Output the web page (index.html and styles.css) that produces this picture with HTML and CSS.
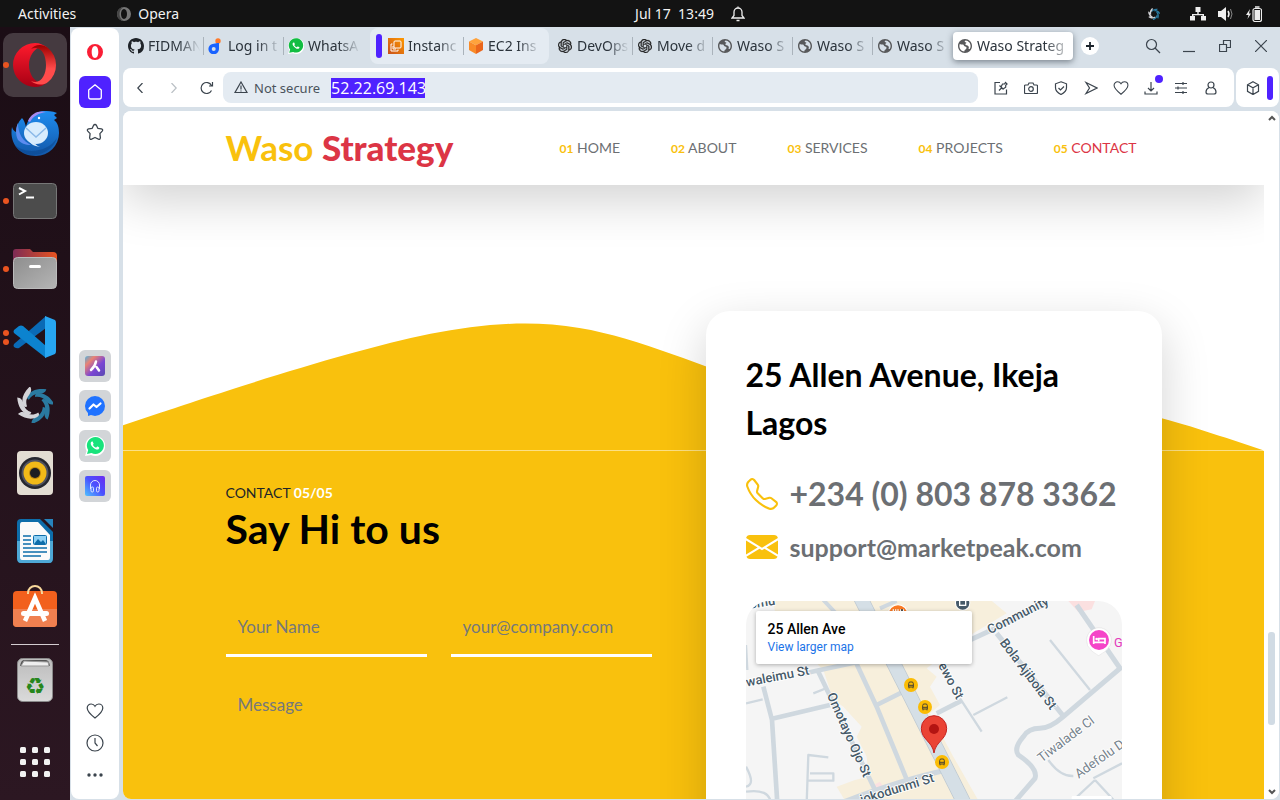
FILE: index.html
```html
<!DOCTYPE html>
<html lang="en">
<head>
<meta charset="utf-8">
<title>Waso Strategy</title>
<link rel="stylesheet" href="styles.css">
</head>
<body>
<svg class="defs" aria-hidden="true">
  <defs>
    <linearGradient id="opera-l" x1="0" y1="0" x2="0" y2="1"><stop offset="0" stop-color="#ff1b2d"/><stop offset="1" stop-color="#a70014"/></linearGradient>
    <linearGradient id="opera-r" x1="0" y1="0" x2="0" y2="1"><stop offset="0" stop-color="#9c0000"/><stop offset=".6" stop-color="#ff4b4b"/></linearGradient>
    <linearGradient id="bird" x1="0" y1="0" x2="0" y2="1"><stop offset="0" stop-color="#1f8df0"/><stop offset="1" stop-color="#1257a8"/></linearGradient>
    <linearGradient id="folder" x1="0" y1="0" x2="1" y2="0"><stop offset="0" stop-color="#7d2b55"/><stop offset="1" stop-color="#e95420"/></linearGradient>
    <linearGradient id="grey" x1="0" y1="0" x2="1" y2="1"><stop offset="0" stop-color="#8e8e8e"/><stop offset="1" stop-color="#b5b5b5"/></linearGradient>
    <linearGradient id="bin" x1="0" y1="0" x2="0" y2="1"><stop offset="0" stop-color="#bcbcbc"/><stop offset="1" stop-color="#dadada"/></linearGradient>
    <linearGradient id="aria" x1="0" y1="0" x2="1" y2="1"><stop offset="0" stop-color="#4fb3e0"/><stop offset=".25" stop-color="#e98273"/><stop offset=".6" stop-color="#7a46d4"/><stop offset="1" stop-color="#5a4bb0"/></linearGradient>
    <linearGradient id="player" x1="0" y1="1" x2="1" y2="0"><stop offset="0" stop-color="#4fc3ff"/><stop offset=".5" stop-color="#4a52ff"/><stop offset="1" stop-color="#6b2cf0"/></linearGradient>
    <linearGradient id="aws" x1="0" y1="1" x2="1" y2="0"><stop offset="0" stop-color="#c8511b"/><stop offset="1" stop-color="#f90"/></linearGradient>
    <symbol id="globe" viewBox="2 2 20 20"><path d="M12 2C6.480 2 2 6.480 2 12s4.480 10 10 10 10-4.480 10-10S17.520 2 12 2zM4 12c0-1 .2-2 .5-2.800 1.500.8 3 .8 4.500.8 1.800 0 1 2.500 3 2.800 1.800.2 2.500 1 2 2.700-.4 1.400-2 1.500-2.500 2.500-.3.8-.5 1.500-.5 2C7 19.500 4 16 4 12zm13 3.500c1-1 .5-2.500-.5-3.500s-3.500-.8-4-2 1.500-1.500 1.500-2.500-2.500-.5-2.500-1.800c0-.7.8-1.200 1.500-1.500 4 .5 7 3.800 7 7.800 0 1.500-.4 2.800-1 4-.8.6-1.600.4-2-.5z" fill="#58595b"/></symbol>
    <symbol id="gpt" viewBox="0 0 24 24"><path d="M22.2819 9.8211a5.9847 5.9847 0 0 0-.5157-4.9108 6.0462 6.0462 0 0 0-6.5098-2.9A6.0651 6.0651 0 0 0 4.9807 4.1818a5.9847 5.9847 0 0 0-3.9977 2.9 6.0462 6.0462 0 0 0 .7427 7.0966 5.98 5.98 0 0 0 .511 4.9107 6.051 6.051 0 0 0 6.5146 2.9001A5.9847 5.9847 0 0 0 13.2599 24a6.0557 6.0557 0 0 0 5.7718-4.2058 5.9894 5.9894 0 0 0 3.9977-2.9001 6.0557 6.0557 0 0 0-.7475-7.0729zm-9.022 12.6081a4.4755 4.4755 0 0 1-2.8764-1.0408l.1419-.0804 4.7783-2.7582a.7948.7948 0 0 0 .3927-.6813v-6.7369l2.02 1.1686a.071.071 0 0 1 .038.052v5.5826a4.504 4.504 0 0 1-4.4945 4.4944zm-9.6607-4.1254a4.4708 4.4708 0 0 1-.5346-3.0137l.142.0852 4.783 2.7582a.7712.7712 0 0 0 .7806 0l5.8428-3.3685v2.3324a.0804.0804 0 0 1-.0332.0615L9.74 19.9502a4.4992 4.4992 0 0 1-6.1408-1.6464zM2.3408 7.8956a4.485 4.485 0 0 1 2.3655-1.9728V11.6a.7664.7664 0 0 0 .3879.6765l5.8144 3.3543-2.0201 1.1685a.0757.0757 0 0 1-.071 0l-4.8303-2.7865A4.504 4.504 0 0 1 2.3408 7.872zm16.5963 3.8558L13.1038 8.364 15.1192 7.2a.0757.0757 0 0 1 .071 0l4.8303 2.7913a4.4944 4.4944 0 0 1-.6765 8.1042v-5.6772a.79.79 0 0 0-.407-.667zm2.0107-3.0231l-.142-.0852-4.7735-2.7818a.7759.7759 0 0 0-.7854 0L9.409 9.2297V6.8974a.0662.0662 0 0 1 .0284-.0615l4.8303-2.7866a4.4992 4.4992 0 0 1 6.6802 4.66zM8.3065 12.863l-2.02-1.1638a.0804.0804 0 0 1-.038-.0567V6.0742a4.4992 4.4992 0 0 1 7.3757-3.4537l-.142.0805L8.704 5.459a.7948.7948 0 0 0-.3927.6813zm1.0976-2.3654l2.602-1.4998 2.6069 1.4998v2.9994l-2.5974 1.4997-2.6067-1.4997Z" fill="#222" stroke="#222" stroke-width=".6"/></symbol>
    <symbol id="handset" viewBox="0 0 16 16"><path d="M11.603 9.653c-.197-.1-1.17-.578-1.353-.643-.182-.066-.315-.098-.445.099-.133.197-.513.643-.627.775-.114.133-.232.148-.43.05-.197-.1-.836-.308-1.592-.985-.59-.525-.985-1.175-1.103-1.372-.114-.198-.011-.304.088-.403.087-.088.197-.232.296-.346.1-.114.133-.198.198-.33.065-.134.034-.248-.015-.347-.05-.099-.445-1.076-.612-1.47-.16-.389-.323-.335-.445-.34-.114-.007-.247-.007-.38-.007a.729.729 0 0 0-.529.247c-.182.198-.691.677-.691 1.654 0 .977.71 1.916.81 2.049.098.133 1.394 2.132 3.383 2.992.47.205.84.326 1.129.418.475.152.904.129 1.246.08.38-.058 1.171-.48 1.338-.943.164-.464.164-.86.114-.943-.049-.084-.182-.133-.378-.232z" fill="#fff"/></symbol>
    <symbol id="heart" viewBox="0 0 18 18"><path d="M9 16C4.500 12.500 1.200 9.500 1.200 6a4 4 0 0 1 4-4C7 2 8.200 2.800 9 4.200 9.800 2.800 11 2 12.800 2a4 4 0 0 1 4 4c0 3.500-3.300 6.500-7.800 10z"/></symbol>
    <path id="blade" d="M10 8.500C13 3 20 0 30 1.500 29 5 26 6.500 22 6.500c-5 0-8 2-10.500 6C9.500 11.500 9.200 10 10 8.500z"/>
    <symbol id="swirl" viewBox="-1 -1 38 38">
      <g fill="#2a7aa0"><use href="#blade"/><use href="#blade" transform="rotate(51 18 18)"/><use href="#blade" transform="rotate(103 18 18)"/><use href="#blade" transform="rotate(154 18 18)"/></g>
      <g fill="#d4d4d8"><use href="#blade" transform="rotate(206 18 18)"/><use href="#blade" transform="rotate(257 18 18)"/><use href="#blade" transform="rotate(309 18 18)"/></g>
    </symbol>
    <symbol id="bus" viewBox="-21 -21 42 42"><circle r="21" fill="#fbbc04"/><path d="M-7-4q0-5 4-5h6q4 0 4 5v10H-7z" fill="none" stroke="#4a4433" stroke-width="3"/><path d="M-7 1H7M-6 6v4M6 6v4" stroke="#4a4433" stroke-width="3"/></symbol>
  </defs>
</svg>

<header class="topbar">
  <div class="topbar-left">
    <span>Activities</span>
    <span class="topbar-app"><svg width="14" height="14" viewBox="0 0 14 14"><path fill-rule="evenodd" d="M7 0a7 7 0 1 0 0 14A7 7 0 0 0 7 0zm0 2c2 0 3 2.500 3 5s-1 5-3 5-3-2.500-3-5 1-5 3-5z" fill="#777"/><path d="M7 0a7 7 0 0 0 0 14C1 12 1 2 7 0z" fill="#444"/></svg>Opera</span>
  </div>
  <div class="topbar-clock"><span>Jul 17&nbsp; 13:49</span><svg width="14" height="16" viewBox="0 0 14 16" fill="none" stroke="#eee" stroke-width="1.300"><path d="M1 12h12l-2-2.500V6a4 4 0 0 0-8 0v3.500zM5.500 14.500h3M7 2V.5"/></svg></div>
  <div class="topbar-tray">
    <svg width="12" height="12"><use href="#swirl"/></svg>
    <svg width="16" height="14" viewBox="0 0 16 14" fill="#eee"><path d="M5.500 0h5v5H8.700v2H14v2h2v4.500h-5V9h1.500V8.300h-9V9H5v4.500H0V9h2V7h5.300V5H5.500z"/></svg>
    <svg width="16" height="14" viewBox="0 0 16 14"><path d="M0 4h3l5-4v14l-5-4H0z" fill="#eee"/><path d="M10 4q2 3 0 6" fill="none" stroke="#eee" stroke-width="1.500"/><path d="M12.500 2q3 5 0 10" fill="none" stroke="#888"/></svg>
    <svg width="16" height="16" viewBox="0 0 16 16"><path d="M4 3L0 9h2.500L1.500 13 5 7.500H3z" fill="#eee"/><rect x="7" y="2.500" width="8.500" height="13" rx="2" fill="none" stroke="#eee" stroke-width="1.200"/><rect x="8.500" y="4" width="5.500" height="10" fill="#eee"/><path d="M9 1h4.500" stroke="#eee" stroke-width="1.500"/></svg>
  </div>
</header>

<div class="desktop">
<nav class="dock" aria-label="Dock">
  <button class="dock-item active one" aria-label="Opera"><svg viewBox="0 0 48 48"><path d="M24 2a22 22 0 1 0 0 44c5 0 9-2 13-5-3 2-6 2-8 1-6-2-11-9-11-18S23 8 29 6c3-1 6 0 8 1-4-3-8-5-13-5z" fill="url(#opera-l)"/><path d="M20 8c4-5 12-5 17-1a22 22 0 0 1 0 34c-5 4-13 3-17-1 10 4 15-6 15-16S30 4 20 8z" fill="url(#opera-r)"/></svg></button>
  <button class="dock-item" aria-label="Thunderbird"><svg viewBox="0 0 48 48"><path d="M1 18c1 3 2 4 4 5 0-5 2-10 6-14 2 2 3 5 4 9 1-6 7-15 17-16 5 0 9 0 14 2l-3 2 3 3-3 2c4 3 5 8 5 13a23 23 0 0 1-23 23C8 47-2 34 1 18z" fill="url(#bird)"/><path d="M17 12c3-8 11-11 18-9-7 1-13 4-16 10z" fill="#a58cf0"/><path d="M7 31c-3-6-2-13 0-17 0 11 5 18 13 22-6 0-10-2-13-5z" fill="#5c8cf0"/><path d="M3 35c8 10 33 10 43-6-5 18-33 24-43 6z" fill="#0c4790" opacity=".6"/><ellipse cx="25" cy="24" rx="12" ry="11" fill="#d8ecfd"/><path d="M15 19l10 9 10-9" fill="none" stroke="#8bb9e8" stroke-width="1.500"/><path d="M18 31c6 3 8 6 11 7-6-1-10-3-11-7z" fill="#d8ecfd"/><circle cx="28" cy="9" r="1.200" fill="#fff"/></svg></button>
  <button class="dock-item one" aria-label="Terminal"><svg viewBox="0 0 48 48"><rect x="2.500" y="6.500" width="43" height="35" rx="4" fill="#4c4c4c" stroke="#777"/><path d="M8 11l6 3-6 3.500M15 20.500h8" fill="none" stroke="#fff" stroke-width="2"/></svg></button>
  <button class="dock-item one" aria-label="Files"><svg viewBox="0 0 48 48"><path d="M2 20V7q0-3 3-3h14l3 3h20q4 0 4 4v9z" fill="url(#folder)"/><rect x="2.500" y="12.500" width="43" height="31" rx="4" fill="url(#grey)" stroke="#bbb"/><rect x="18" y="20" width="12" height="3" rx="1.500" fill="#fff"/></svg></button>
  <button class="dock-item two" aria-label="Visual Studio Code"><svg viewBox="0 0 48 48"><path d="M3 31L35 3v12L8 35q-2 1-5-1-1-1 0-3z" fill="#0a6ab6"/><path d="M3 17l5-4q2-1 4 0l23 20v12L3 20q-1-1 0-3z" fill="#0c83cf"/><path d="M34 3l10 4q1 1 1 3v28q0 2-1 3l-10 4z" fill="#27a6f2"/></svg></button>
  <button class="dock-item" aria-label="Swirl"><svg viewBox="-6 -6 48 48"><use href="#swirl" width="36" height="36"/></svg></button>
  <button class="dock-item" aria-label="Rhythmbox"><svg viewBox="0 0 48 48"><rect x="6" y="2" width="36" height="44" rx="4" fill="#e3ddd3"/><circle cx="24" cy="24" r="16" fill="#26272f"/><circle cx="24" cy="24" r="13.500" fill="#515360"/><circle cx="24" cy="24" r="11.500" fill="#f2ba18"/><circle cx="24" cy="24" r="6" fill="#bb8710"/><circle cx="24" cy="24" r="5" fill="#1c1e22"/></svg></button>
  <button class="dock-item" aria-label="LibreOffice Writer"><svg viewBox="0 0 48 48"><path d="M10 2h19l13 13v26q0 5-4 5H10q-4 0-4-5V6q0-4 4-4z" fill="#0d6daa"/><path d="M6 24h36v17q0 5-4 5H10q-4 0-4-5z" fill="#4ea8d6"/><path d="M33 2h9v9z" fill="#2784bd"/><path d="M11 5h16l12 13v22q0 3-2 3H11q-2 0-2-3V8q0-3 2-3z" fill="#fafafa"/><path d="M12 19h8M12 23h8M12 27h8M12 31h24M12 35h24M12 39h18" stroke="#0d6daa" stroke-width="1.600"/><rect x="22.500" y="18.500" width="13" height="9" rx="1" fill="#8ed0f4" stroke="#0d6daa"/><path d="M23 27l4-5 3 3 2-2 3 4z" fill="#0d6daa"/></svg></button>
  <button class="dock-item" aria-label="Ubuntu Software"><svg viewBox="0 0 48 48"><rect x="2" y="6" width="44" height="36" rx="4" fill="#f2601d"/><path d="M2 24h44v14q0 4-4 4H6q-4 0-4-4z" fill="#f08050"/><path d="M17 9v-1a7 7 0 0 1 14 0v1" fill="none" stroke="#f8d89b" stroke-width="2"/><path d="M14 36l10-23 10 23" fill="none" stroke="#fff" stroke-width="4.500"/><rect x="10" y="26" width="28" height="5" rx="2.500" fill="#fff"/></svg></button>
  <hr class="dock-line">
  <button class="dock-item" aria-label="Trash"><svg viewBox="0 0 48 48"><rect x="6.500" y="2.500" width="35" height="43" rx="5" fill="url(#bin)" stroke="#8a8a8a"/><path d="M9 10q1-6 4-6h22q3 0 4 6z" fill="#555"/><path d="M10 10l3-5 24 1 1 4z" fill="#eee" stroke="#999"/><text x="24" y="38" text-anchor="middle" font-family="DejaVu Sans" font-size="23" fill="#26861b">♻</text></svg></button>
  <button class="dock-item dock-apps" aria-label="Show Applications"><svg viewBox="0 0 48 48" fill="#f2f2f2"><g id="dots"><rect x="9" y="9" width="6" height="6" rx="1.500"/><rect x="21" y="9" width="6" height="6" rx="1.500"/><rect x="33" y="9" width="6" height="6" rx="1.500"/></g><use href="#dots" y="12"/><use href="#dots" y="24"/></svg></button>
</nav>

<div class="browser">
  <aside class="sidebar">
    <button class="side-btn" aria-label="Opera menu"><svg width="16" height="16" viewBox="0 0 16 16"><path fill-rule="evenodd" d="M8 0a8 8 0 1 0 0 16A8 8 0 0 0 8 0zm0 2c2.200 0 3.300 2.800 3.300 6S10.200 14 8 14s-3.300-2.800-3.300-6S5.800 2 8 2z" fill="#fa1e35"/></svg></button>
    <button class="side-btn home" aria-label="Home"><svg width="16" height="16" viewBox="0 0 16 16" fill="none" stroke="#fff" stroke-width="1.300"><path d="M8 .8L14.300 6v7q0 2-2 2H3.700q-2 0-2-2V6z" stroke-linejoin="round"/></svg></button>
    <button class="side-btn" aria-label="Bookmarks"><svg width="18" height="18" viewBox="0 0 18 18" fill="none" stroke="#3b444d" stroke-width="1.300" stroke-linejoin="round"><path d="M9 1.500q1 0 1.500 1l1.300 2.800 3.600.6q2 .6.800 2.200l-2.300 2.500.5 4.200q-.2 2-2 1.300L9 14.500l-3.400 1.600q-1.800.7-2-1.300l.5-4.200L1.800 8.100q-1.200-1.600.8-2.200l3.600-.6 1.300-2.800q.5-1 1.500-1z"/></svg></button>
    <div class="side-apps">
      <button class="tile" aria-label="Aria"><svg width="20" height="20" viewBox="0 0 20 20"><rect width="20" height="20" rx="3" fill="url(#aria)"/><path d="M11 5.500q-1 5-5 8.500M11.500 11l2.500 3.500" stroke="#fff" stroke-width="2.500" stroke-linecap="round" fill="none"/></svg></button>
      <button class="tile" aria-label="Messenger"><svg width="20" height="20" viewBox="0 0 20 20"><circle cx="10" cy="10" r="10" fill="#1f72ff"/><path d="M3 15v5l6-2z" fill="#1f72ff"/><path d="M4.500 12.500l4-4 3 2.500 4-3.500" fill="none" stroke="#fff" stroke-width="2.200" stroke-linejoin="round" stroke-linecap="round"/></svg></button>
      <button class="tile" aria-label="WhatsApp"><svg width="20" height="20" viewBox="0 0 20 20"><path d="M0 20l1.600-5A10 10 0 1 1 6 19z" fill="#fff"/><path d="M2 18l1.200-4A8.500 8.500 0 1 1 6.500 17z" fill="#19e37c"/><use href="#handset" x="1.500" y="1" width="17" height="17"/></svg></button>
      <button class="tile" aria-label="Player"><svg width="20" height="20" viewBox="0 0 20 20"><rect width="20" height="20" rx="2" fill="url(#player)"/><path d="M5.500 13V9a4.500 4.500 0 0 1 9 0v4" fill="none" stroke="#dfe6ff"/><rect x="6" y="11" width="2.500" height="5" rx="1.200" fill="none" stroke="#dfe6ff"/><rect x="11.500" y="11" width="2.500" height="5" rx="1.200" fill="none" stroke="#dfe6ff"/></svg></button>
    </div>
    <button class="side-btn low" aria-label="Favourites"><svg width="20" height="18" class="line thin"><use href="#heart"/></svg></button>
    <button class="side-btn low" aria-label="History"><svg width="18" height="18" viewBox="0 0 18 18" class="line thin"><circle cx="9" cy="9" r="8"/><path d="M9 4v5l2.500 3"/></svg></button>
    <button class="side-btn low" aria-label="More"><svg width="16" height="4" viewBox="0 0 16 4" fill="#3b444d"><circle cx="2" cy="2" r="1.700"/><circle cx="8" cy="2" r="1.700"/><circle cx="14" cy="2" r="1.700"/></svg></button>
  </aside>

  <div class="window">
    <div class="tabs">
      <button class="tab"><svg width="16" height="16" viewBox="0 0 16 16"><path d="M8 0C3.580 0 0 3.580 0 8c0 3.540 2.290 6.530 5.470 7.590.4.07.55-.17.55-.38 0-.19-.01-.82-.01-1.490-2.010.37-2.530-.49-2.690-.94-.09-.23-.48-.94-.82-1.130-.28-.15-.68-.52-.01-.53.63-.01 1.080.58 1.230.82.72 1.210 1.870.87 2.330.66.07-.52.28-.87.51-1.070-1.780-.2-3.640-.89-3.640-3.950 0-.87.31-1.590.82-2.150-.08-.2-.36-1.020.08-2.120 0 0 .67-.21 2.200.82.64-.18 1.320-.27 2-.27.68 0 1.360.09 2 .27 1.530-1.040 2.200-.82 2.200-.82.44 1.100.16 1.920.08 2.120.51.56.82 1.270.82 2.150 0 3.070-1.870 3.750-3.650 3.950.29.25.54.73.54 1.480 0 1.070-.01 1.930-.01 2.200 0 .21.15.46.55.38A8.012 8.012 0 0 0 16 8c0-4.420-3.580-8-8-8z" fill="#1f2328"/></svg><span>FIDMAN</span></button>
      <button class="tab"><svg width="16" height="16" viewBox="0 0 16 16"><circle cx="10" cy="3" r="2.700" fill="#ff7a2b"/><path fill-rule="evenodd" d="M11 5v6a5.300 5.300 0 1 1-5.300-5.300C8 5.700 8 5 11 5zM5.700 9a2 2 0 1 0 0 4 2 2 0 0 0 0-4z" fill="#1a63ff"/></svg><span>Log in t</span></button>
      <button class="tab plain"><svg width="16" height="16" viewBox="0 0 20 20"><path d="M0 20l1.600-5A10 10 0 1 1 6 19z" fill="#fff"/><path d="M1.500 18.500l1.200-4A9 9 0 1 1 6.500 17.500z" fill="#12bd42"/><use href="#handset" x="1.500" y="1" width="17" height="17"/></svg><span>WhatsA</span></button>
      <div class="tab-group">
        <i class="group-bar"></i>
        <button class="tab"><svg width="16" height="16" viewBox="0 0 16 16"><rect width="16" height="16" fill="url(#aws)"/><g fill="none" stroke="#fff" stroke-width="1"><rect x="6" y="3" width="7" height="7" rx="1"/><path d="M4.500 6H3v7h7v-1.500M5 8v3h3"/></g></svg><span>Instanc</span></button>
        <button class="tab plain"><svg width="16" height="16" viewBox="0 0 16 16"><path d="M8 0l7 3.500-7 3.800-7-3.800z" fill="#ffa33c"/><path d="M1 3.500l7 3.800V16l-7-4z" fill="#f98b28"/><path d="M15 3.500L8 7.300V16l7-4z" fill="#ea661c"/></svg><span>EC2 Ins</span></button>
      </div>
      <button class="tab"><svg width="14" height="14"><use href="#gpt"/></svg><span>DevOps</span></button>
      <button class="tab"><svg width="14" height="14"><use href="#gpt"/></svg><span>Move d</span></button>
      <button class="tab"><svg width="14" height="14"><use href="#globe"/></svg><span>Waso S</span></button>
      <button class="tab"><svg width="14" height="14"><use href="#globe"/></svg><span>Waso S</span></button>
      <button class="tab plain"><svg width="14" height="14"><use href="#globe"/></svg><span>Waso S</span></button>
      <button class="tab current"><svg width="14" height="14"><use href="#globe"/></svg><span>Waso Strateg</span></button>
      <button class="new-tab" aria-label="New tab"><svg width="8" height="8" viewBox="0 0 8 8"><path d="M4 0v8M0 4h8" stroke="#1c242c" stroke-width="1.800"/></svg></button>
      <div class="win-btns">
        <button aria-label="Search tabs"><svg width="16" height="16" viewBox="0 0 16 16" class="line thin"><circle cx="6.500" cy="6.500" r="5"/><path d="M10 10l5 5"/></svg></button>
        <button aria-label="Minimize"><svg width="12" height="14" viewBox="0 0 12 14" class="line thin"><path d="M0 12.500h12"/></svg></button>
        <button aria-label="Restore"><svg width="12" height="12" viewBox="0 0 12 12" class="line thin"><path d="M.5 4.500h7v7h-7zM4.500 4.500v-4h7v7h-4"/></svg></button>
        <button aria-label="Close"><svg width="12" height="12" viewBox="0 0 12 12" class="line thin"><path d="M0 0l12 12M12 0L0 12"/></svg></button>
      </div>
    </div>

    <div class="bars">
      <div class="toolbar">
        <div class="history">
          <button aria-label="Back"><svg width="6" height="10" viewBox="0 0 6 10" class="line thin"><path d="M5.500 0L.8 5l4.700 5"/></svg></button>
          <button aria-label="Forward" disabled><svg width="6" height="10" viewBox="0 0 6 10" class="line thin faint"><path d="M.5 0l4.700 5L.5 10"/></svg></button>
          <button aria-label="Reload"><svg width="14" height="14" viewBox="0 0 14 14" class="line thin"><path d="M11.500 9.500A5.500 5.500 0 1 1 11.500 4.500M12.500 1v4H9"/></svg></button>
        </div>
        <div class="address">
          <svg width="14" height="13" viewBox="0 0 14 13" class="line thin"><path d="M7 1l6 10.500H1zM7 4.500v4M7 9.500v1"/></svg>
          <span>Not secure</span>
          <input type="text" value="52.22.69.143" aria-label="Address">
        </div>
        <div class="actions">
          <button aria-label="Edit page"><svg width="14" height="14" viewBox="0 0 14 14" class="line thin"><path d="M6 1.500H1v11.500h11.500V8.500M5 9.500l3-3M5.500 4.500l4 4M7 6l1.500-3h2l1-1.500 1.500 1.500-1.300 1.200v2L9 8"/></svg></button>
          <button aria-label="Snapshot"><svg width="14" height="14" viewBox="0 0 14 14" class="line thin"><path d="M1.500 4H4l1-2h4l1 2h2.500q1 0 1 1v6.500q0 1-1 1h-11q-1 0-1-1V5q0-1 1-1z"/><circle cx="7" cy="8" r="2.300"/></svg></button>
          <button aria-label="Ad blocker"><svg width="14" height="14" viewBox="0 0 14 14" class="line thin"><path d="M7 .8l5.500 2v4c0 3-2 5-5.500 6.700C3.500 11.800 1.500 9.800 1.500 6.800v-4zM4.500 7l2 2 3.500-3.500"/></svg></button>
          <button aria-label="Send"><svg width="14" height="14" viewBox="0 0 14 14" class="line thin"><path d="M2 1.500L13 7 2 12.500 5.500 7z"/></svg></button>
          <button aria-label="Save"><svg width="16" height="16" class="line thin"><use href="#heart"/></svg></button>
          <button class="badge" aria-label="Downloads"><svg width="14" height="14" viewBox="0 0 14 14" class="line thin"><path d="M7 1v8.500M4 7l3 3 3-3M1 10.500v2.500h12v-2.500"/></svg></button>
          <button aria-label="Easy setup"><svg width="14" height="14" viewBox="0 0 14 14" class="line thin"><path d="M1 2.500h12M1 7h12M1 11.500h12M9 1v3M4 5.500v3M9 10v3"/></svg></button>
          <button aria-label="Profile"><svg width="14" height="14" viewBox="0 0 14 14" class="line thin"><circle cx="7" cy="4" r="3"/><path d="M5 6.500Q2 8 2 11q0 2 2 2h6q2 0 2-2 0-3-3-4.500"/></svg></button>
        </div>
      </div>
      <div class="extensions"><button aria-label="Extensions"><svg width="14" height="14" viewBox="0 0 14 14" class="line thin"><path d="M7 .8l5.500 3v6.500L7 13.500l-5.500-3.200V3.800zM1.500 3.800L7 6.800l5.500-3M7 6.800v6.500"/></svg></button><i></i></div>
    </div>

    <div class="viewport">
      <div class="page">
        <header class="site-header">
          <div class="wrap header-row">
            <a class="brand" href="#home">Waso <b>Strategy</b></a>
            <nav class="menu">
              <a href="#home"><b>01</b> HOME</a>
              <a href="#about"><b>02</b> ABOUT</a>
              <a href="#services"><b>03</b> SERVICES</a>
              <a href="#projects"><b>04</b> PROJECTS</a>
              <a href="#contact" class="here"><b>05</b> CONTACT</a>
            </nav>
          </div>
        </header>
        <svg class="wave" viewBox="0 0 1440 320" aria-hidden="true"><path fill="#f9c10d" d="M0,288L48,272C96,256,192,224,288,197.300C384,171,480,149,576,165.300C672,181,768,235,864,250.700C960,267,1056,245,1152,250.700C1248,256,1344,288,1392,304L1440,320L0,320Z"/></svg>
        <section class="contact" id="contact">
          <div class="wrap contact-row">
            <div class="form-side">
              <p class="eyebrow">CONTACT <b>05/05</b></p>
              <h2>Say Hi to us</h2>
              <form>
                <input type="text" placeholder="Your Name" aria-label="Your Name">
                <input type="email" placeholder="your@company.com" aria-label="Email">
                <textarea placeholder="Message" aria-label="Message"></textarea>
              </form>
            </div>
            <div class="card">
              <h3>25 Allen Avenue, Ikeja Lagos</h3>
              <a class="phone" href="tel:+2348038783362"><svg width="32" height="32" viewBox="0 0 16 16" fill="#f9c10d"><path d="M3.654 1.328a.678.678 0 0 0-1.015-.063L1.605 2.300c-.483.484-.661 1.169-.45 1.770a17.568 17.568 0 0 0 4.168 6.608 17.569 17.569 0 0 0 6.608 4.168c.601.211 1.286.033 1.770-.45l1.034-1.034a.678.678 0 0 0-.063-1.015l-2.307-1.794a.678.678 0 0 0-.58-.122l-2.190.547a1.745 1.745 0 0 1-1.657-.459L5.482 8.062a1.745 1.745 0 0 1-.46-1.657l.548-2.190a.678.678 0 0 0-.122-.58L3.654 1.328zM1.884.511a1.745 1.745 0 0 1 2.612.163L6.290 2.980c.329.423.445.974.315 1.494l-.547 2.190a.678.678 0 0 0 .178.643l2.457 2.457a.678.678 0 0 0 .644.178l2.189-.547a1.745 1.745 0 0 1 1.494.315l2.306 1.794c.829.645.905 1.870.163 2.611l-1.034 1.034c-.74.74-1.846 1.065-2.877.702a18.634 18.634 0 0 1-7.010-4.420 18.634 18.634 0 0 1-4.420-7.009c-.362-1.030-.037-2.137.703-2.877L1.885.511z"/></svg><span>+234 (0) 803 878 3362</span></a>
              <a class="mail" href="mailto:support@marketpeak.com"><svg width="32" height="32" viewBox="0 0 16 16" fill="#f9c10d"><path d="M.05 3.555A2 2 0 0 1 2 2h12a2 2 0 0 1 1.950 1.555L8 8.414.05 3.555ZM0 4.697v7.104l5.803-3.558L0 4.697ZM6.761 8.830l-6.570 4.027A2 2 0 0 0 2 14h12a2 2 0 0 0 1.808-1.144l-6.570-4.027L8 9.586l-1.239-.757Zm3.436-.586L16 11.801V4.697l-5.803 3.546Z"/></svg><span>support@marketpeak.com</span></a>
              <div class="map">
                <svg viewBox="18 33 1128 900" font-family="Roboto, sans-serif" font-weight="500">
                  <rect x="18" y="33" width="1128" height="900" fill="#f5f5f5"/>
                  <path d="M100 33L290 33 430 33 700 33 740 20 800 70 700 130 560 235 590 260 570 290 600 345 570 370 640 500 720 640 800 800 500 800 320 640 290 590 345 570 385 560 380 500 350 440 365 410 310 350 280 330 250 240 110 100z" fill="#f7efdc"/>
                  <path d="M985 33h80l-10 25-40 8zM400 585l20-10 10 15-15 10z" fill="#fbe0e0"/>
                  <g fill="none" stroke="#cfd8df" stroke-linejoin="round">
                    <path d="M250 30l160 170M420 55L470 33" stroke-width="12"/>
                    <path d="M70 290L96 390 112 640M18 275M195 250L370 212M235 245L405 600M350 222L410 350 505 580M410 345L520 290M590 370L665 332M90 388L270 345" stroke-width="14"/>
                    <path d="M690 150L760 118 920 40M770 130L970 378M1010 45L1140 235M1146 230L970 380Q930 415 900 415 865 415 850 440 820 475 835 495 895 535 885 565L820 640M300 640Q480 570 620 540" stroke-width="15"/>
                    <path d="M930 150L1050 300M660 325L725 425M700 375L802 322M925 510Q960 560 1000 558M1060 565L1146 520M1065 570L1130 640M1065 570L990 640M18 165L22 240M220 310l40-16M18 340l50-12M200 640l5-145 60 7M210 550h70v22h-75M18 530q30 55 0 60M18 605q70-10 75 35" stroke-width="7"/>
                  </g>
                  <path d="M350 0L708 710" stroke="#bcc7cf" stroke-width="44"/><path d="M350 0L708 710" stroke="#d5dfe6" stroke-width="40"/>
                  <g fill="#465a69" stroke="#fff" stroke-width="5" paint-order="stroke" font-size="39">
                    <text transform="translate(20 290) rotate(-11)">waleimu St</text>
                    <text transform="translate(30 56) rotate(-9)">omu</text>
                    <text transform="translate(260 315) rotate(66)">Omotayo Ojo St</text>
                    <text transform="translate(365 642) rotate(-17)">jokodunmi St</text>
                    <text transform="translate(750 133) rotate(-27)">Community</text>
                    <text transform="translate(778 158) rotate(53)">Bola Ajibola St</text>
                    <text transform="translate(594 226) rotate(62)">ewo St</text>
                    <g fill="#75828c" font-weight="400"><text transform="translate(905 518) rotate(-37)">Tiwalade Cl</text><text transform="translate(1016 566) rotate(-35)">Adefolu Dr</text></g>
                  </g>
                  <use href="#bus" x="492" y="264" width="42" height="42"/><use href="#bus" x="534" y="330" width="42" height="42"/><use href="#bus" x="585" y="495" width="42" height="42"/>
                  <circle cx="474" cy="74" r="31" fill="#fff"/><circle cx="474" cy="74" r="28" fill="#fb7b24"/><path d="M460 58v12M467 58v12M474 58v12M482 58v12h8V58" stroke="#fff" stroke-width="4"/>
                  <circle cx="668" cy="39" r="23" fill="#fff"/><circle cx="668" cy="39" r="20" fill="#465a69"/><rect x="659" y="28" width="18" height="18" fill="none" stroke="#fff" stroke-width="4"/>
                  <path d="M1040 152a37 37 0 1 1 70 15q-10 18-34 30-24-12-33-30z" fill="#fff" stroke="#ccc"/><circle cx="1077" cy="150" r="30" fill="#f545c8"/><path d="M1061 138v24M1061 157h34M1095 162v-16h-19v8" fill="none" stroke="#fff" stroke-width="5"/><circle cx="1070" cy="147" r="4" fill="#fff"/>
                  <text x="1122" y="171" font-size="38" fill="#e33abb" font-weight="400">G</text>
                  <path d="M582 489c-5-35-38-40-38-74a38 38 0 0 1 76 0c0 34-33 39-38 74z" fill="#ea4335" stroke="#c5221f" stroke-width="3"/><circle cx="582" cy="417" r="15" fill="#b31412"/>
                  <rect x="995" y="618" width="120" height="240" rx="4" fill="#fff"/>
                </svg>
                <div class="place"><strong>25 Allen Ave</strong><a href="#map">View larger map</a></div>
              </div>
            </div>
          </div>
        </section>
      </div>
      <div class="scroll" aria-hidden="true">
        <svg width="8" height="6" viewBox="0 0 8 6"><path d="M1 5l3-3 3 3" fill="none" stroke="#555" stroke-width="2"/></svg>
        <i></i>
        <svg width="8" height="6" viewBox="0 0 8 6"><path d="M1 1l3 3 3-3" fill="none" stroke="#555" stroke-width="2"/></svg>
      </div>
    </div>
  </div>
</div>
</div>
</body>
</html>
```
FILE: styles.css
```css
* { box-sizing: border-box; }
body {
  margin: 0;
  height: 100vh;
  display: grid;
  grid-template-rows: 27px 1fr;
  overflow: hidden;
  font-family: "Noto Sans", sans-serif;
  font-size: 14px;
  color: #2b333b;
}
button { border: 0; padding: 0; margin: 0; background: none; font: inherit; color: inherit; }
svg { display: block; flex: none; }
a { text-decoration: none; color: inherit; }
.defs { position: absolute; width: 0; height: 0; }
.line { fill: none; stroke: #3b444d; stroke-width: 1.5; }
.line.thin { stroke-width: 1.2; }
.line.faint { stroke: #b9bfc4; }

/* System bar */
.topbar {
  display: grid;
  grid-template-columns: 1fr auto 1fr;
  align-items: center;
  background: #131313;
  color: #f2f2f2;
  padding: 0 18px;
}
.topbar-left { display: flex; gap: 41px; }
.topbar-app { display: flex; align-items: center; gap: 7px; }
.topbar-clock { display: flex; align-items: center; gap: 17px; margin-left: 100px; }
.topbar-tray { display: flex; align-items: center; justify-content: flex-end; gap: 12px; }
.topbar-tray svg:first-child { margin-right: 18px; }

.desktop { display: grid; grid-template-columns: 70px minmax(0, 1fr); min-height: 0; }

/* Dock */
.dock {
  display: flex;
  flex-direction: column;
  align-items: center;
  padding: 4px 0;
  background: linear-gradient(#1b0d15, #2c1722);
}
.dock-item {
  position: relative;
  width: 64px;
  height: 64px;
  margin: 2px 0;
  flex: none;
  display: grid;
  place-items: center;
  border-radius: 10px;
}
.dock-item svg { width: 48px; height: 48px; }
.dock-item.active { background: #453a40; }
.one::before, .two::before, .two::after {
  content: "";
  position: absolute;
  left: 0;
  top: 29px;
  width: 6px;
  height: 6px;
  border-radius: 50%;
  background: #e95420;
}
.two::before { top: 25px; }
.two::after { top: 34px; }
.dock-line { width: 48px; height: 1px; margin: 1px 0; border: 0; background: #d3ccd0; flex: none; }
.dock-apps { margin-top: auto; }

/* Browser */
.browser {
  display: grid;
  grid-template-columns: 48px minmax(0, 1fr);
  gap: 4px;
  padding: 0 1px 1px;
  background: #d7e0e8;
  min-height: 0;
}
.sidebar {
  display: flex;
  flex-direction: column;
  align-items: center;
  margin-top: 1px;
  padding: 4px 0 8px;
  background: #fff;
  border-radius: 8px;
}
.side-btn { width: 32px; height: 32px; margin: 4px 0; display: grid; place-items: center; border-radius: 6px; }
.side-btn.home { background: #4f22ff; }
.side-btn.low { margin: 0; }
.side-apps { display: flex; flex-direction: column; gap: 8px; margin: auto 0; padding-top: 5px; }
.tile { width: 32px; height: 32px; display: grid; place-items: center; border-radius: 6px; background: #d2d5d8; }

.window { display: flex; flex-direction: column; min-width: 0; min-height: 0; }
.tabs { display: flex; align-items: center; height: 41px; padding: 0 0 4px 1px; flex: none; }
.tab {
  display: flex;
  align-items: center;
  gap: 4px;
  width: 80px;
  height: 18px;
  padding: 0 0 0 4px;
  border-right: 1px solid #aab3bb;
  flex: none;
}
.tab span {
  flex: 1;
  min-width: 0;
  white-space: nowrap;
  text-align: left;
  line-height: 18px;
  mask-image: linear-gradient(to right, #000 55%, transparent 95%);
}
.tab.plain { border-color: transparent; }
.tab-group { display: flex; align-items: center; height: 36px; margin: 0 4px 0 6px; padding: 0 5px 0 6px; border-radius: 8px; background: #e4ebf2; }
.group-bar { width: 6px; height: 24px; margin-right: 2px; border-radius: 3px; background: #4f22ff; }
.tab-group ~ .tab { gap: 5px; padding-left: 5px; }
.tab.current { width: 120px; height: 28px; border: 0; border-radius: 4px; background: #fff; box-shadow: 0 2px 6px rgba(60, 70, 80, .6); }
.tab.current span { mask-image: linear-gradient(to right, #000 70%, transparent); }
.new-tab { width: 18px; height: 18px; margin-left: 8px; display: grid; place-items: center; border-radius: 50%; background: #fff; }
.win-btns { display: flex; margin-left: auto; }
.win-btns button { width: 36px; height: 28px; display: grid; place-items: center; }

.bars { display: flex; gap: 2px; height: 39px; flex: none; margin-bottom: 4px; }
.toolbar { flex: 1; display: flex; align-items: center; min-width: 0; padding-right: 8px; background: #fff; border-radius: 8px; }
.history { display: flex; }
.history button { width: 34px; height: 30px; display: grid; place-items: center; }
.history button:last-child { width: 32px; }
.address { flex: 1; display: flex; align-items: center; gap: 6px; height: 31px; padding: 0 11px; border-radius: 8px; background: #e4ebf2; }
.address span { font-size: 13px; color: #4a535c; }
.address input { width: 94px; height: 20px; margin-left: 5px; padding: 0; border: 0; background: #4f22ff; color: #fff; font: 16px/20px "Open Sans", sans-serif; }
.actions { display: flex; margin-left: 8px; }
.actions button { position: relative; width: 30px; height: 30px; display: grid; place-items: center; }
.badge::after { content: ""; position: absolute; right: 3px; top: 2px; width: 8px; height: 8px; border-radius: 50%; background: #4f22ff; }
.extensions { display: flex; align-items: center; justify-content: space-between; width: 43px; padding: 0 6px 0 10px; background: #fff; border-radius: 8px; }
.extensions i { width: 6px; height: 24px; border-radius: 3px; background: #4f22ff; }

/* Web page */
.viewport { flex: 1; display: grid; grid-template-columns: minmax(0, 1fr) 15px; min-height: 0; overflow: hidden; background: #fff; border-radius: 8px; }
.page { overflow: hidden; min-height: 0; font-family: Lato, sans-serif; color: #000; }
.wrap { max-width: 936px; margin: 0 auto; }
.site-header { position: relative; z-index: 1; height: 74px; background: #fff; box-shadow: 0 16px 48px rgba(0, 0, 0, .175); }
.header-row { display: flex; align-items: center; justify-content: space-between; height: 100%; padding: 0 25px 2px 0; }
.brand { font-size: 35px; font-weight: 700; color: #f9c10d; }
.brand b { color: #dc3545; }
.menu { display: flex; gap: 51px; font-size: 14px; color: #6c6f73; }
.menu b { font-size: 12px; color: #f9c10d; }
.menu .here { color: #dc3545; }
.wave { width: 100%; height: auto; margin-top: 12px; }
.contact { min-height: 600px; background: #f9c10d; }
.contact-row { display: grid; grid-template-columns: minmax(0, 426fr) minmax(0, 456fr); column-gap: 54px; align-items: start; }
.form-side { padding-top: 32px; }
.eyebrow { margin: 0; font-size: 14px; line-height: 20px; color: #212529; }
.eyebrow b { color: #fff; }
h2 { margin: 0 0 45px; font-size: 41px; line-height: 52px; font-weight: 700; }
form { display: grid; grid-template-columns: 1fr 1fr; gap: 24px; }
form input, form textarea {
  width: 100%;
  height: 57px;
  padding: 0 12px;
  border: 0;
  border-bottom: 3px solid #fff;
  background: transparent;
  font: 17px/24px Lato, sans-serif;
}
form textarea { grid-column: 1 / -1; height: 150px; padding-top: 12px; resize: none; }
form ::placeholder { color: #75787b; opacity: 1; }
.card { margin-top: -140px; padding: 40px; border-radius: 24px; background: #fff; box-shadow: 0 16px 48px rgba(0, 0, 0, .175); }
h3 { margin: 0 0 23px; font-size: 32px; line-height: 48px; font-weight: 700; }
.phone, .mail { display: flex; align-items: center; gap: 12px; height: 48px; color: #6c6f73; font-weight: 700; white-space: nowrap; }
.phone { font-size: 32px; }
.mail { font-size: 25px; margin: 5px 0 30px; }
.map { position: relative; overflow: hidden; border-radius: 24px; }
.map > svg { width: 100%; height: auto; }
.place { position: absolute; left: 10px; top: 10px; width: 216px; height: 53px; padding: 9px 12px; display: flex; flex-direction: column; background: #fff; border-radius: 2px; box-shadow: 0 1px 4px rgba(0, 0, 0, .3); font-family: Roboto, sans-serif; }
.place strong { font-size: 14px; line-height: 18px; font-weight: 500; }
.place a { font-size: 12px; line-height: 18px; color: #1a73e8; }

.scroll { display: grid; grid-template-rows: 6px 517fr 94fr 65fr 6px; justify-items: center; padding: 4px 0; background: #fff; }
.scroll i { grid-row: 3; width: 7px; border-radius: 3px; background: #d1dbe4; }
.scroll svg:last-child { grid-row: 5; }
```
